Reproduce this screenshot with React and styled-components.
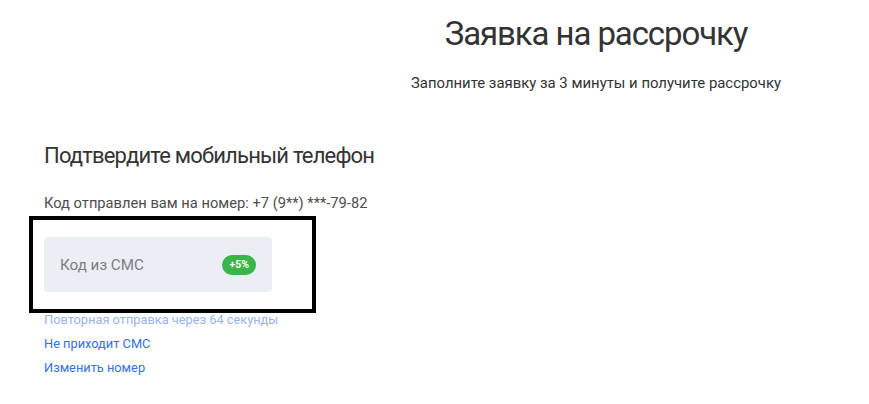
import styled, { createGlobalStyle } from "styled-components";

const Global = createGlobalStyle`
  body {
    margin: 0;
    background: #fff;
    font-family: Roboto, "Liberation Sans", sans-serif;
    color: #333333;
  }
`;

export default function App() {
  return (
    <Page>
      <Global />
      <Header>
        <Title>Заявка на рассрочку</Title>
        <Subtitle>Заполните заявку за 3 минуты и получите рассрочку</Subtitle>
      </Header>
      <Section>
        <SectionTitle>Подтвердите мобильный телефон</SectionTitle>
        <Hint>Код отправлен вам на номер: +7 (9**) ***-79-82</Hint>
        <Frame>
          <CodeField>
            <Placeholder>Код из СМС</Placeholder>
            <Badge>+5%</Badge>
          </CodeField>
        </Frame>
        <Links>
          <LinkText $muted>Повторная отправка через 64 секунды</LinkText>
          <LinkText>Не приходит СМС</LinkText>
          <LinkText>Изменить номер</LinkText>
        </Links>
      </Section>
    </Page>
  );
}

// styles
const Page = styled.div`
  width: 869px;
  height: 404px;
  overflow: hidden;
`;

const Header = styled.div`
  display: flex;
  flex-direction: column;
  align-items: center;
  padding-left: 323px;
  padding-top: 12px;
`;

const Title = styled.h1`
  margin: 0;
  font-size: 33px;
  font-weight: 400;
  letter-spacing: -1.1px;
  line-height: 44px;
  color: #333;
`;

const Subtitle = styled.p`
  margin: 17px 0 0;
  font-size: 14.9px;
  line-height: 20px;
  color: #333;
`;

const Section = styled.div`
  padding: 49px 0 0 44px;
`;

const SectionTitle = styled.h2`
  margin: 0;
  font-size: 22px;
  font-weight: 400;
  letter-spacing: -0.8px;
  line-height: 28px;
  color: #333;
`;

const Hint = styled.p`
  margin: 24px 0 0;
  font-size: 14.7px;
  line-height: 18px;
  color: #4d4d4d;
`;

const Frame = styled.div`
  margin: 4px 0 0 -15px;
  width: 287px;
  border: 4px solid #000;
  padding: 17px 40px 17px 11px;
  box-sizing: border-box;
`;

const CodeField = styled.div`
  display: flex;
  align-items: center;
  justify-content: space-between;
  width: 228px;
  height: 55px;
  padding: 0 16px 0 16px;
  box-sizing: border-box;
  background: #ebeff5;
  border-radius: 4px;
`;

const Placeholder = styled.span`
  font-size: 15.2px;
  color: #7b7d84;
`;

const Badge = styled.span`
  display: inline-flex;
  align-items: center;
  justify-content: center;
  height: 20px;
  padding: 0 7px;
  border-radius: 10px;
  background: #3ab54a;
  color: #fff;
  font-size: 10.5px;
  font-weight: 700;
`;

const Links = styled.div`
  display: flex;
  flex-direction: column;
  gap: 6px;
  margin-top: -2px;
`;

const LinkText = styled.span`
  font-size: 12.8px;
  line-height: 18px;
  color: ${(props) => (props.$muted ? "#99b3f0" : "#336fee")};
`;
